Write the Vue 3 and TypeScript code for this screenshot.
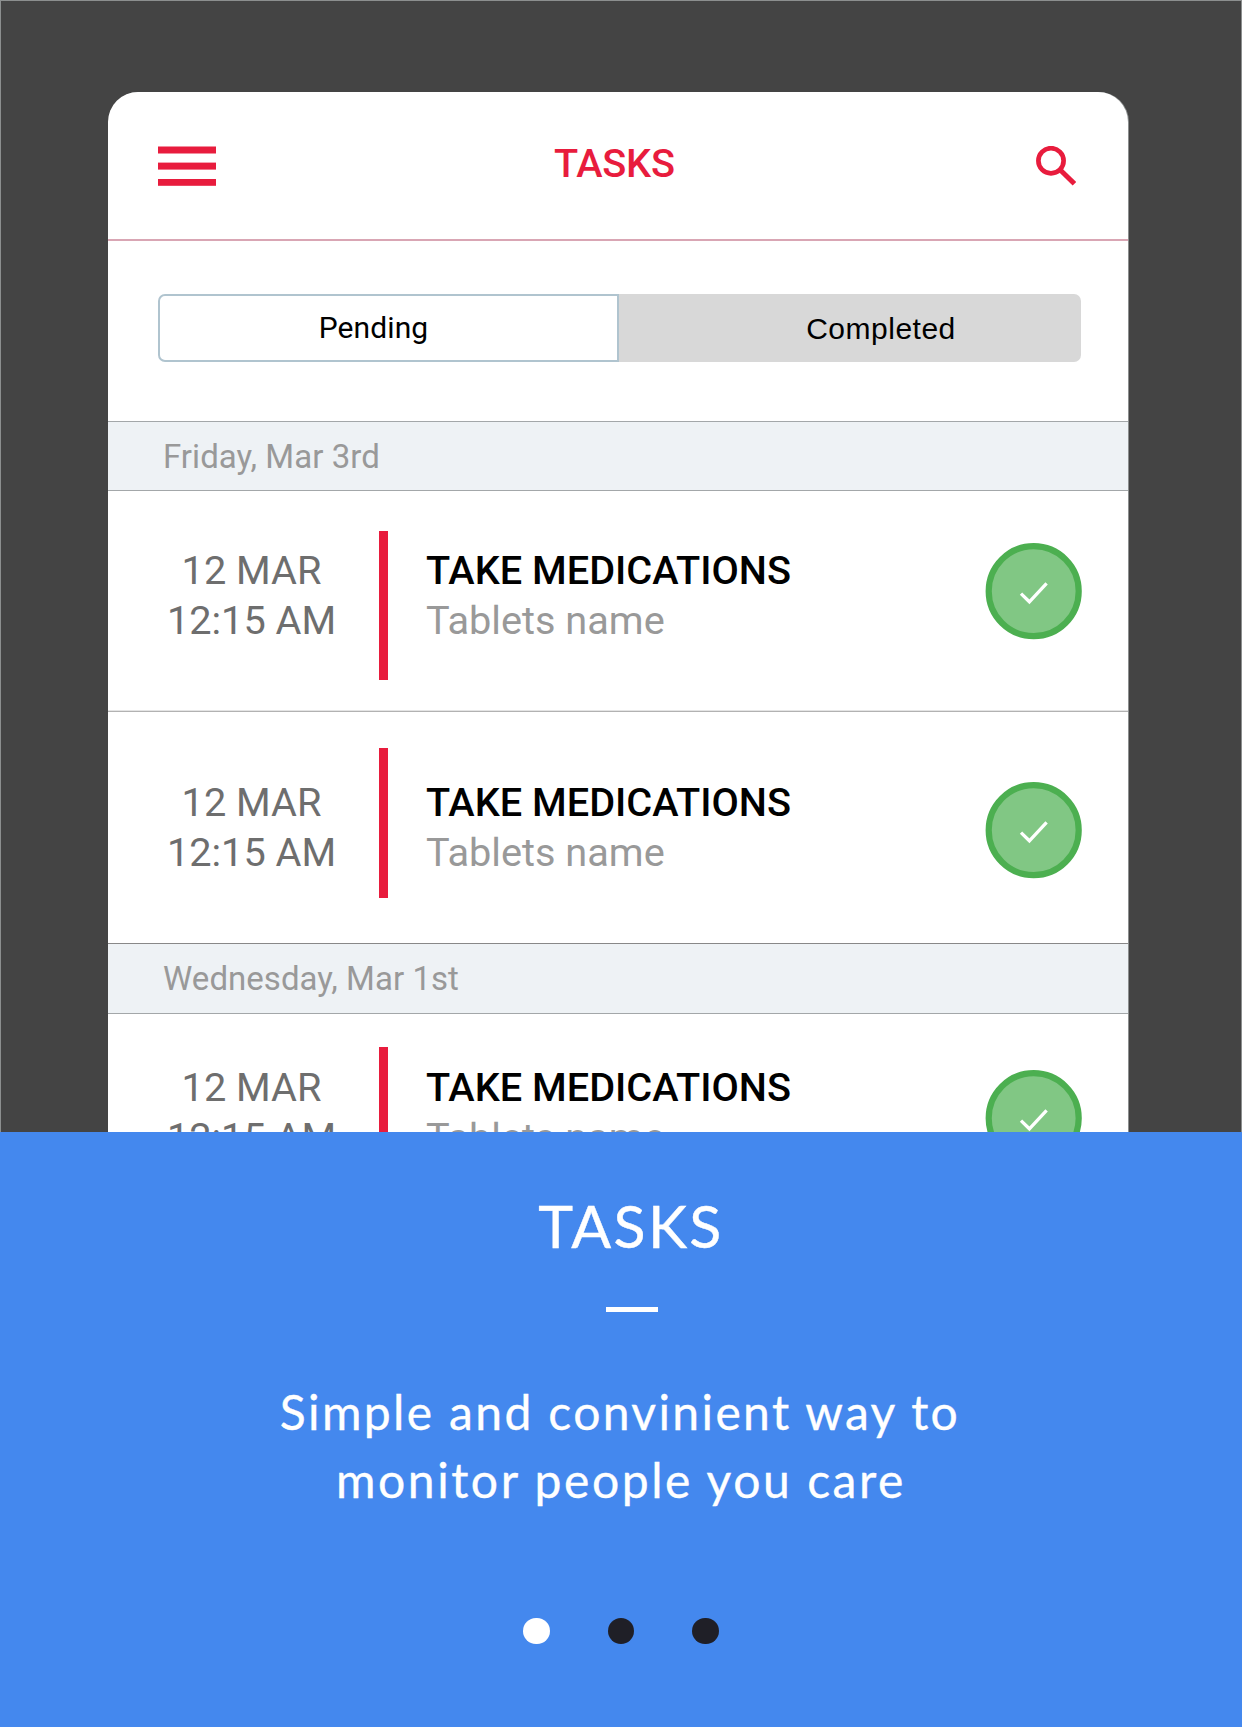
<script setup lang="ts">
interface Task {
  id: number
  date: string
  time: string
  title: string
  detail: string
  row: string
}

interface Day {
  label: string
  tasks: Task[]
}

const base = { date: '12 MAR', time: '12:15 AM', title: 'TAKE MEDICATIONS', detail: 'Tablets name' }

const days: Day[] = [
  {
    label: 'Friday, Mar 3rd',
    tasks: [
      { id: 1, ...base, row: 'row-first' },
      { id: 2, ...base, row: 'row-last' },
    ],
  },
  { label: 'Wednesday, Mar 1st', tasks: [{ id: 3, ...base, row: 'row-cut' }] },
]

const slides = [true, false, false]
</script>

<template>
  <main class="screen">
    <section class="preview">
      <div class="card">
        <header class="bar">
          <svg class="menu" viewBox="0 0 58 40" fill="#e81c3d">
            <rect y="0.5" width="58" height="7" />
            <rect y="16.6" width="58" height="7" />
            <rect y="33" width="58" height="6.8" />
          </svg>
          <h1 class="title">TASKS</h1>
          <svg class="search" viewBox="0 0 40 40" fill="none" stroke="#e81c3d">
            <circle cx="15" cy="14.8" r="12.6" stroke-width="4.7" />
            <path d="M24.3 24 L38.4 37.8" stroke-width="5" />
          </svg>
        </header>

        <div class="filter">
          <button class="tab tab-pending"><span>Pending</span></button>
          <button class="tab tab-completed"><span>Completed</span></button>
        </div>

        <template v-for="day in days" :key="day.label">
          <h2 class="day">{{ day.label }}</h2>
          <article v-for="task in day.tasks" :key="task.id" class="task" :class="task.row">
            <div class="when">
              <span>{{ task.date }}</span>
              <span>{{ task.time }}</span>
            </div>
            <i class="mark"></i>
            <div class="what">
              <strong>{{ task.title }}</strong>
              <span>{{ task.detail }}</span>
            </div>
            <svg class="done" viewBox="0 0 96 96">
              <circle cx="47.7" cy="48.2" r="45" fill="#81c784" stroke="#4caf50" stroke-width="6.2" />
              <path d="M35 50.6 L43.4 58.8 L60.6 40.4" fill="none" stroke="#fff" stroke-width="3.3" />
            </svg>
          </article>
        </template>
      </div>
    </section>

    <section class="promo">
      <h2 class="promo-title">TASKS</h2>
      <hr class="dash" />
      <p class="promo-text">
        <span class="line-a">Simple and convinient way to</span>
        <span class="line-b">monitor people you care</span>
      </p>
      <div class="dots">
        <i v-for="(active, i) in slides" :key="i" class="dot" :class="{ active }"></i>
      </div>
    </section>
  </main>
</template>

<style>
body {
  margin: 0;
}
</style>

<style scoped>
* {
  box-sizing: border-box;
}
h1,
h2,
p {
  margin: 0;
  font-weight: 400;
}
.screen {
  width: 1242px;
  height: 1727px;
  overflow: hidden;
  font-family: Roboto, 'Liberation Sans', sans-serif;
  display: flex;
  flex-direction: column;
}
.preview {
  flex: none;
  height: 1132px;
  overflow: hidden;
  background: #444;
  border: 1px solid #8c8f8f;
  border-bottom: 0;
  padding: 91px 112px 0 107px;
}
.card {
  width: 1020px;
  height: 1100px;
  background: #fff;
  border-radius: 30px 30px 0 0;
  box-shadow: 1px 0 0 #8c8f8f;
  overflow: hidden;
}
.bar {
  display: flex;
  height: 149px;
  align-items: flex-start;
  border-bottom: 2px solid #d9a6b4;
}
.menu {
  flex: none;
  width: 58px;
  height: 40px;
  margin: 54px 0 0 50px;
}
.title {
  width: 160px;
  margin: 47px 0 0 338px;
  font-size: 39.7px;
  line-height: 50px;
  font-weight: 500;
  letter-spacing: -0.2px;
  white-space: nowrap;
  color: #e81c3d;
}
.search {
  flex: none;
  width: 40px;
  height: 40px;
  margin: 54px 0 0 322px;
}
.filter {
  display: flex;
  height: 180px;
  padding: 53px 0 0 50px;
}
.tab {
  height: 68px;
  padding: 0;
  display: flex;
  align-items: center;
  justify-content: center;
  color: #000;
  font-size: 30px;
  line-height: 40px;
}
.tab-pending {
  width: 461px;
  padding-right: 30px;
  background: #fff;
  border: 2px solid #b0c4cf;
  border-radius: 7px 0 0 7px;
  font-family: Roboto, sans-serif;
  letter-spacing: 0.12px;
}
.tab-completed {
  width: 462px;
  padding: 2px 0 0 62px;
  background: #d8d8d8;
  border: 0;
  border-radius: 0 7px 7px 0;
  font-family: 'Liberation Sans', sans-serif;
  letter-spacing: 0.5px;
}
.day {
  height: 70px;
  padding: 1px 0 0 55px;
  background: #eef2f5;
  border-top: 1px solid #a3a7a9;
  border-bottom: 1px solid #a3a7a9;
  font-size: 33px;
  line-height: 68px;
  letter-spacing: 0.05px;
  color: #999;
}
.task {
  display: flex;
  align-items: flex-start;
}
.when {
  width: 187px;
  margin-left: 50px;
  display: flex;
  flex-direction: column;
  align-items: center;
  font-size: 39.7px;
  line-height: 50px;
  color: #6e6e6e;
}
.mark {
  width: 8.7px;
  height: 149px;
  margin-left: 34px;
  background: #e81c3d;
}
.what {
  width: 420px;
  margin-left: 38.3px;
  display: flex;
  flex-direction: column;
  font-size: 39.7px;
  line-height: 50px;
  color: #999;
}
.what strong {
  font-weight: 500;
  color: #000;
}
.done {
  flex: none;
  width: 96px;
  height: 96px;
  margin-left: 140px;
  overflow: visible;
}
.row-first {
  height: 221px;
  border-bottom: 1px solid #b2b2b2;
  box-shadow: inset 0 -1px 0 #e4e4e4;
}
.row-first .when,
.row-first .what {
  margin-top: 55px;
}
.row-first .mark {
  margin-top: 40px;
}
.row-first .done {
  margin-top: 52px;
}
.row-last {
  height: 231px;
}
.row-last .when,
.row-last .what {
  margin-top: 66px;
}
.row-last .mark {
  height: 150px;
  margin-top: 36px;
}
.row-last .done {
  margin-top: 70px;
}
.row-cut .when,
.row-cut .what {
  margin-top: 49px;
}
.row-cut .mark {
  margin-top: 33px;
}
.row-cut .done {
  margin-top: 56px;
}
.row-last + .day {
  height: 71px;
  border-top-color: #888;
}
.promo {
  flex: 1;
  background: #4488ee;
  color: #fff;
  font-family: Lato, sans-serif;
  display: flex;
  flex-direction: column;
  align-items: center;
}
.promo-title {
  margin: 59px -20px 0 0;
  font-size: 59px;
  line-height: 70px;
  letter-spacing: 2.3px;
  -webkit-text-stroke: 0.4px #fff;
}
.dash {
  width: 52px;
  height: 5px;
  margin: 46px 0 0 22px;
  border: 0;
  background: #fff;
}
.promo-text {
  margin-top: 66px;
  display: flex;
  flex-direction: column;
  align-items: center;
  font-size: 48px;
  line-height: 68px;
  white-space: nowrap;
  -webkit-text-stroke: 0.35px #fff;
}
.line-a {
  letter-spacing: 2.36px;
  margin-right: 2px;
}
.line-b {
  letter-spacing: 2.56px;
}
.dots {
  display: flex;
  gap: 57.7px;
  margin-top: 103.6px;
}
.dot {
  width: 26.8px;
  height: 26.8px;
  border-radius: 50%;
  background: #1f1f27;
}
.dot.active {
  background: #fff;
}
</style>
